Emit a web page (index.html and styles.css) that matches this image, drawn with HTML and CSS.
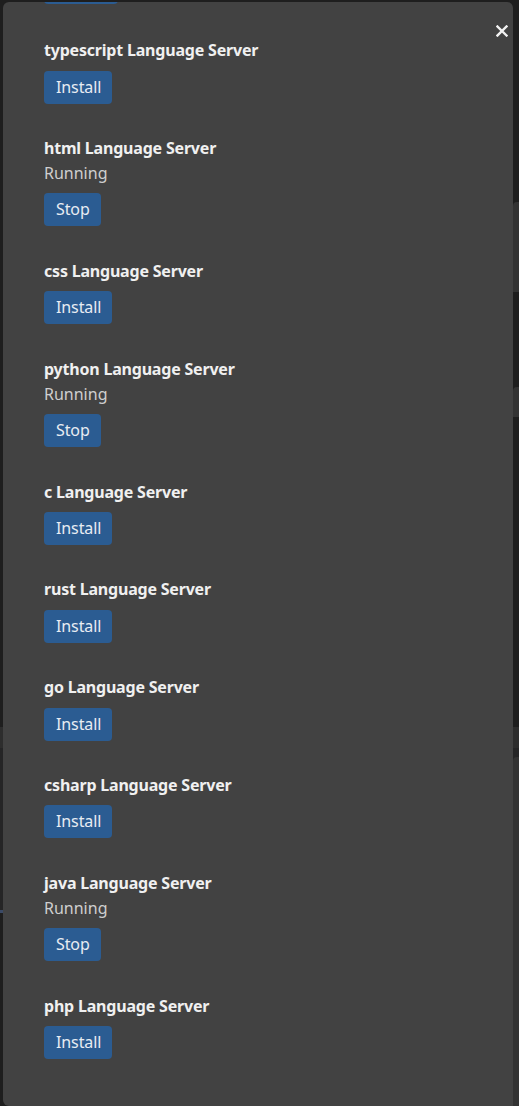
FILE: index.html
```html
<!DOCTYPE html>
<html lang="en">
<head>
<meta charset="utf-8">
<title>Language Servers</title>
<link rel="stylesheet" href="styles.css">
</head>
<body>
<div class="backdrop">
  <div class="bg-strip bg-a"></div>
  <div class="bg-strip bg-b"></div>
  <div class="bg-line"></div>
  <div class="bg-bar bar-1"></div>
  <div class="bg-bar bar-2"></div>
  <div class="bg-bar bar-3"></div>
</div>
<div class="modal">
  <button class="close" aria-label="Close">
    <svg width="12" height="12" viewBox="0 0 12 12"><path d="M1.5 1.5 L10.5 10.5 M10.5 1.5 L1.5 10.5" stroke="#f2f2f2" stroke-width="2.4" stroke-linecap="square"/></svg>
  </button>
  <div class="prev-btn"></div>
  <div class="list">
    <div class="server">
      <div class="name">typescript Language Server</div>
      <button class="btn">Install</button>
    </div>
    <div class="server">
      <div class="name">html Language Server</div>
      <div class="status">Running</div>
      <button class="btn">Stop</button>
    </div>
    <div class="server">
      <div class="name">css Language Server</div>
      <button class="btn">Install</button>
    </div>
    <div class="server">
      <div class="name">python Language Server</div>
      <div class="status">Running</div>
      <button class="btn">Stop</button>
    </div>
    <div class="server">
      <div class="name">c Language Server</div>
      <button class="btn">Install</button>
    </div>
    <div class="server">
      <div class="name">rust Language Server</div>
      <button class="btn">Install</button>
    </div>
    <div class="server">
      <div class="name">go Language Server</div>
      <button class="btn">Install</button>
    </div>
    <div class="server">
      <div class="name">csharp Language Server</div>
      <button class="btn">Install</button>
    </div>
    <div class="server">
      <div class="name">java Language Server</div>
      <div class="status">Running</div>
      <button class="btn">Stop</button>
    </div>
    <div class="server">
      <div class="name">php Language Server</div>
      <button class="btn">Install</button>
    </div>
  </div>
</div>
</body>
</html>
```
FILE: styles.css
```css
html, body {
  margin: 0;
  padding: 0;
}
body {
  width: 519px;
  height: 1106px;
  overflow: hidden;
  background: #1e1e1e;
  font-family: "Noto Sans", "Open Sans", sans-serif;
  position: relative;
}
.backdrop {
  position: absolute;
  inset: 0;
}
.bg-strip {
  position: absolute;
  left: 0;
  width: 519px;
}
.bg-a { top: 727px; height: 21px; background: #2d2d2d; }
.bg-b { top: 748px; height: 162px; background: #252526; }
.bg-line { position: absolute; left: 0; top: 910px; width: 519px; height: 3px; background: #3b4a66; }
.bg-bar {
  position: absolute;
  left: 513px;
  width: 10px;
  background: #333333;
  border-radius: 4px 0 0 0;
}
.bar-1 { top: 202px; height: 90px; }
.bar-2 { top: 387px; height: 30px; }
.bar-3 { top: 757px; height: 349px; }

.modal {
  position: relative;
  margin: 2px 6px 0 3px;
  height: 1104px;
  background: #424242;
  border-radius: 6px 6px 0 6px;
  box-sizing: border-box;
  padding: 36px 0 0 41px;
  overflow: hidden;
}
.prev-btn {
  position: absolute;
  left: 41px;
  top: -30px;
  width: 74px;
  height: 32px;
  background: #2b5c92;
  border-radius: 4px;
}
.close {
  position: absolute;
  top: 23px;
  right: 5px;
  width: 12px;
  height: 12px;
  padding: 0;
  border: none;
  background: transparent;
  display: flex;
  cursor: pointer;
}
.list {
  display: flex;
  flex-direction: column;
  gap: 32.3px;
}
.server {
  display: flex;
  flex-direction: column;
  align-items: flex-start;
}
.name {
  color: #f0f0f0;
  font-weight: 700;
  font-size: 16px;
  line-height: 24px;
  letter-spacing: -0.2px;
  margin-bottom: 8.5px;
}
.status {
  color: #cfcfcf;
  font-size: 16px;
  line-height: 24px;
  margin-top: -7.5px;
  margin-bottom: 8.7px;
}
.btn {
  height: 33px;
  padding: 0 11px 0 12px;
  border: none;
  border-radius: 4px;
  background: #2b5c92;
  color: #e8ecf2;
  font-family: "Noto Sans", "Open Sans", sans-serif;
  font-size: 16px;
  line-height: 33px;
  letter-spacing: -0.1px;
  cursor: pointer;
}
```
